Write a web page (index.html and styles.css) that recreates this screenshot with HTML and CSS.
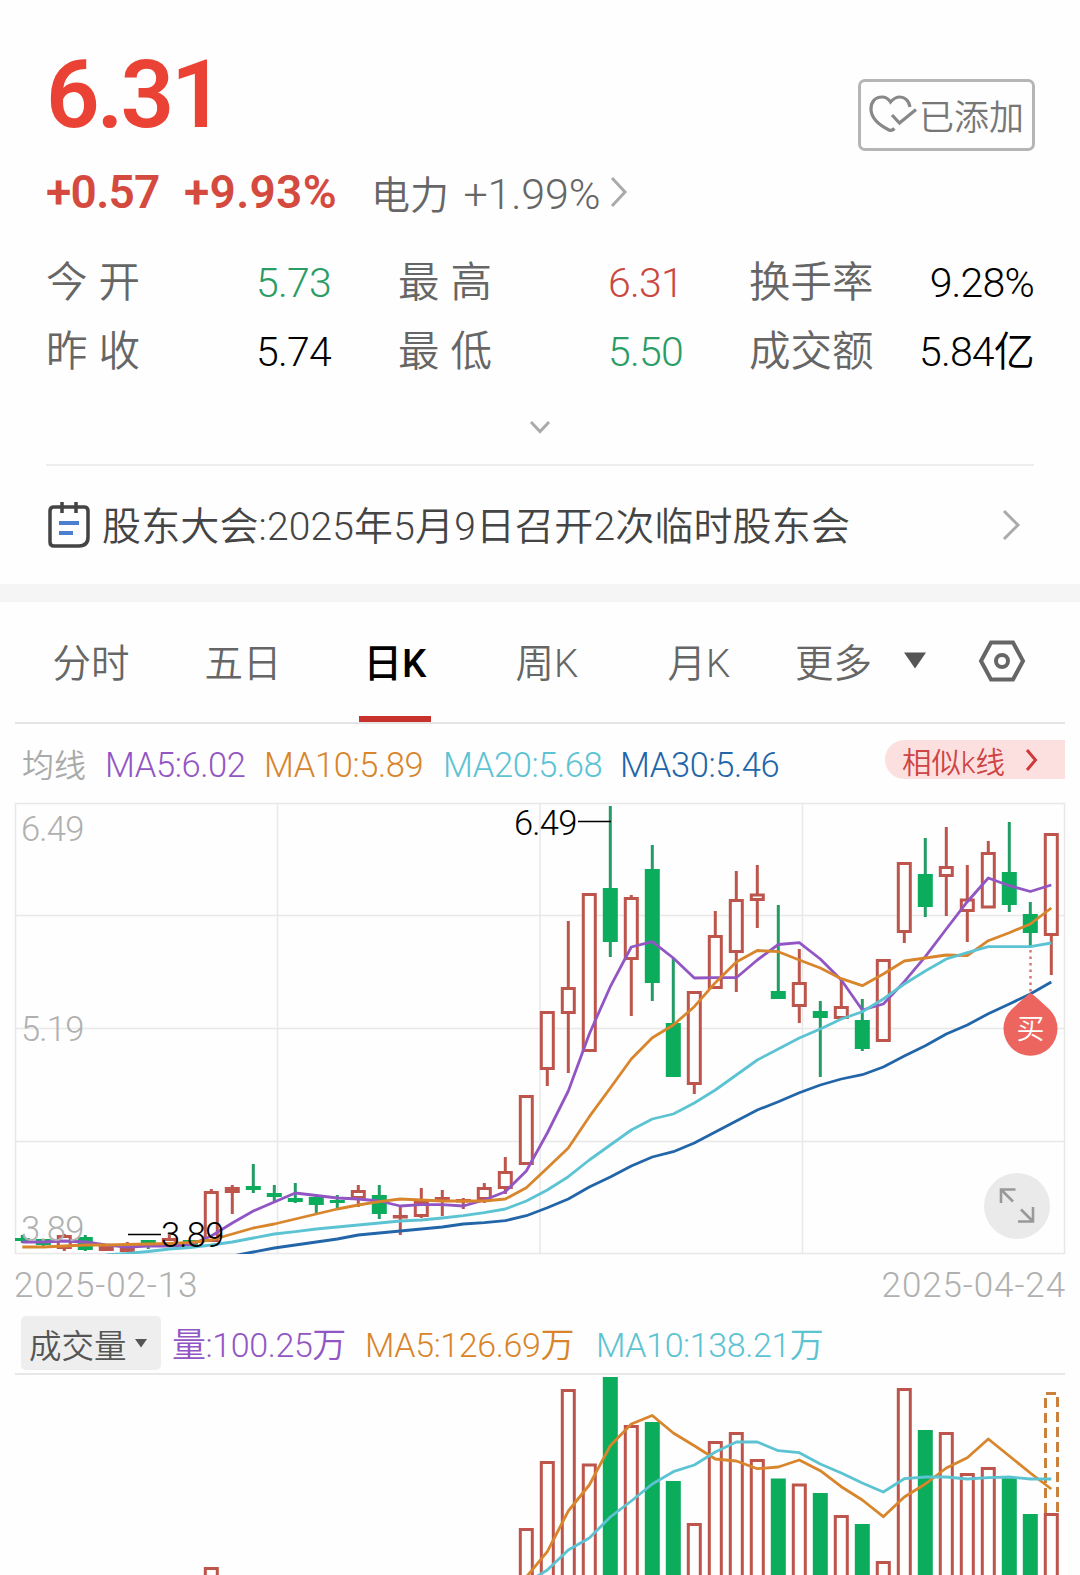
FILE: index.html
```html
<!DOCTYPE html>
<html lang="zh-CN">
<head>
    <meta charset="UTF-8">
    <meta name="viewport" content="width=device-width, initial-scale=1.0">
    <title>个股行情</title>
    <link rel="stylesheet" href="styles.css">
</head>
<body>
    <main class="page">
        <!-- Quote header -->
        <section class="quote">
            <div class="quote-top">
                <div class="price">6.31</div>
                <button class="added-btn" type="button">
                    <svg class="heart-icon" width="48" height="40" viewBox="0 0 48 40" fill="none">
                        <path d="M41 13C40 6 35 3 31 3C27 3 24 5 21.500 8C19 4 16 3 13 3C6 3 2 8 2 15C2 25 12 32 20 36C22 37 24 36 25.500 34.500"/>
                        <path d="M23 21L30.500 29L47 15.500"/>
                    </svg>
                    <span>已添加</span>
                </button>
            </div>
            <div class="change-row">
                <span class="change">+0.57</span>
                <span class="percent">+9.93%</span>
                <span class="sector">电力 <span class="sector-num">+1.99%</span></span>
                <svg class="sector-arrow" width="18" height="32" viewBox="0 0 18 32"><path d="M2 2L15 16L2 30"/></svg>
            </div>
            <div class="stats">
                <span class="label spaced">今开</span><span class="value green">5.73</span>
                <span class="label spaced">最高</span><span class="value red">6.31</span>
                <span class="label">换手率</span><span class="value last">9.28%</span>
                <span class="label spaced">昨收</span><span class="value">5.74</span>
                <span class="label spaced">最低</span><span class="value green">5.50</span>
                <span class="label">成交额</span><span class="value last">5.84亿</span>
            </div>
            <div class="more-stats">
                <svg width="24" height="16" viewBox="0 0 24 16"><path d="M3 3L12 12.500L21 3"/></svg>
            </div>
        </section>

        <!-- Announcement -->
        <section class="notice">
            <svg class="notice-icon" width="42" height="48" viewBox="0 0 42 48" fill="none">
                <path class="frame" d="M6 6H36Q40 6 40 10V36Q40 45 31 45H6Q2 45 2 41V10Q2 6 6 6Z"/>
                <path class="frame" d="M14 1V12M28 1V12"/>
                <path class="lines" d="M11 22H31M11 32H25"/>
            </svg>
            <span class="notice-text">股东大会:2025年5月9日召开2次临时股东会</span>
            <svg class="notice-arrow" width="19" height="34" viewBox="0 0 19 34"><path d="M2 3L16 17L2 31"/></svg>
        </section>

        <!-- Period tabs -->
        <nav class="tabs">
            <span class="tab">分时</span>
            <span class="tab">五日</span>
            <span class="tab active">日K</span>
            <span class="tab">周K</span>
            <span class="tab">月K</span>
            <span class="tab more">更多</span>
            <svg class="more-arrow" width="24" height="17" viewBox="0 0 24 17"><path d="M1 0.500H23L12 16.500Z"/></svg>
            <svg class="settings-icon" width="48" height="42" viewBox="0 0 48 42" fill="none">
                <path d="M13 2.500H35L45 21L35 39.500H13L3 21Z"/>
                <circle cx="24" cy="21" r="6"/>
            </svg>
        </nav>

        <!-- Moving averages -->
        <div class="ma-row">
            <span class="ma-title">均线</span>
            <span class="ma ma5">MA5:6.02</span>
            <span class="ma ma10">MA10:5.89</span>
            <span class="ma ma20">MA20:5.68</span>
            <span class="ma ma30">MA30:5.46</span>
            <a class="similar">相似k线
                <svg width="13" height="24" viewBox="0 0 13 24"><path d="M2 2L10.500 12L2 22"/></svg>
            </a>
        </div>

        <svg id="candle-chart" class="candle-chart" width="1080" height="462" viewBox="0 798 1080 462">
            <defs>
                <clipPath id="plot"><rect x="15" y="803" width="1050" height="451"/></clipPath>
            </defs>
            <path class="grid" d="M15 915.500H1064M15 1028.500H1064M15 1141.500H1064M277.500 804V1253M540 804V1253M802.500 804V1253"/>
            <rect class="frame" x="15.500" y="803.500" width="1049" height="450"/>
            <g id="candles" clip-path="url(#plot)"></g>
            <g id="averages" clip-path="url(#plot)"></g>
            <text class="axis" x="21" y="841">6.49</text>
            <text class="axis" x="21" y="1041">5.19</text>
            <text class="axis" x="21" y="1241">3.89</text>
            <path class="leader" d="M578 821.500H611M128 1234.500H161"/>
            <text class="mark" x="514" y="835">6.49</text>
            <text class="mark" x="161" y="1247">3.89</text>
            <!-- Buy marker -->
            <path class="buy-line" d="M1030.500 950V993"/>
            <path class="buy-pin" d="M1030.500 993Q1033 994 1050 1010A27 27 0 1 1 1011 1010Q1028 994 1030.500 993Z"/>
            <text class="buy-text" x="1030.500" y="1039">买</text>
            <!-- Expand button -->
            <circle class="expand-bg" cx="1017" cy="1206" r="33"/>
            <path class="expand-icon" d="M1001 1203V1189.500H1015.500M1001.500 1190L1013 1201.500M1018 1221.500H1033V1207M1032.500 1221L1021 1209.500"/>
        </svg>

        <div class="dates">
            <span>2025-02-13</span>
            <span>2025-04-24</span>
        </div>

        <!-- Volume -->
        <div class="volume-row">
            <span class="volume-select">成交量
                <svg width="12" height="9" viewBox="0 0 12 9"><path d="M0 0H12L6 8.500Z"/></svg>
            </span>
            <span class="ma vol">量:100.25万</span>
            <span class="ma vol5">MA5:126.69万</span>
            <span class="ma vol10">MA10:138.21万</span>
        </div>
        <svg id="volume-chart" class="volume-chart" width="1080" height="200" viewBox="0 1375 1080 200"></svg>
    </main>
    <script>
        const NS = 'http://www.w3.org/2000/svg';
        const STEP = 21;
        const FIRST = 22.3;
        const xAt = i => FIRST + STEP * i;

        // [rising, body top, body bottom, high, low]
        const candles = [
            [0, 1238, 1241, 1235, 1243], [0, 1239, 1245, 1239, 1248], [1, 1235, 1249, 1234, 1251],
            [0, 1237, 1250, 1235, 1251], [1, 1245, 1251, 1244, 1251], [1, 1246, 1252, 1242, 1252],
            [0, 1240, 1245, 1240, 1249], [1, 1238, 1245, 1235, 1247], [0, 1240, 1245, 1240, 1245],
            [1, 1191, 1242, 1189, 1242], [1, 1187, 1193, 1185, 1214], [0, 1186, 1190, 1164, 1193],
            [0, 1193, 1197, 1185, 1201], [0, 1198, 1202, 1183, 1203], [0, 1197, 1205, 1196, 1213],
            [0, 1200, 1203, 1195, 1208], [1, 1190, 1199, 1185, 1207], [0, 1195, 1214, 1185, 1219],
            [1, 1215, 1218, 1207, 1235], [1, 1201, 1217, 1188, 1218], [1, 1197, 1201, 1190, 1216],
            [1, 1199, 1202, 1198, 1209], [1, 1187, 1200, 1183, 1203], [1, 1171, 1189, 1157, 1194],
            [1, 1095, 1165, 1095, 1165], [1, 1011, 1070, 1011, 1086], [1, 987, 1014, 921, 1073],
            [1, 893, 1052, 893, 1052], [0, 888, 942, 806, 957], [1, 897, 960, 895, 1016],
            [0, 869, 983, 845, 1001], [0, 1023, 1077, 958, 1077], [1, 991, 1085, 991, 1094],
            [1, 935, 989, 911, 989], [1, 899, 953, 871, 992], [1, 893.5, 901, 865, 928],
            [0, 991, 999, 905, 999], [1, 982, 1007, 949, 1023], [0, 1011, 1018, 1001, 1077],
            [1, 1006, 1019, 980, 1019], [0, 1020, 1049, 999, 1051], [1, 959, 1042, 959, 1042],
            [1, 862, 933, 862, 943], [0, 874, 907, 838, 917], [1, 866, 877, 827, 916],
            [1, 898.5, 912, 865, 942], [1, 852, 908.5, 841, 908], [0, 872, 905, 822, 912],
            [0, 914, 933, 902, 946], [1, 833, 936, 833, 975]
        ];

        // class, first index, y values
        const averages = [
            ['line5', 0, [1242, 1242, 1241, 1242, 1245, 1247, 1246, 1246, 1245, 1236, 1223, 1211, 1202, 1193, 1195.5, 1198, 1199, 1201, 1206, 1204.6, 1204.6, 1206, 1200, 1191.7, 1171, 1133, 1091, 1034, 986.7, 947, 941.7, 958, 978, 977.7, 977.7, 960, 944.5, 942.7, 959, 980, 1010, 1004, 981.7, 956.7, 929, 901.7, 878, 885.7, 891.5, 885]],
            ['line10', 0, [1247, 1247, 1246, 1245, 1245, 1244.5, 1244, 1243.5, 1242.5, 1240, 1234, 1228, 1224, 1219, 1214, 1209, 1205, 1201.7, 1199, 1200, 1201, 1201, 1201, 1199, 1187.7, 1168, 1148, 1116.7, 1088, 1059, 1037.7, 1025, 1006.7, 982.7, 962, 950.5, 951.7, 960, 968, 978.7, 985.7, 974, 961, 958, 955, 955.7, 940.7, 932.7, 924, 908]],
            ['line20', 4, [1255, 1253.5, 1251.5, 1249, 1247.5, 1245, 1242, 1238, 1234, 1231.7, 1229, 1227, 1225, 1223, 1221, 1220, 1218, 1215.7, 1212.7, 1209, 1201, 1190, 1176.7, 1160, 1145, 1130, 1119, 1114, 1103, 1090, 1075, 1060, 1049, 1038, 1029, 1019, 1011.7, 999, 984, 971, 959, 952.7, 946.7, 946.7, 946.7, 943]],
            ['line30', 10, [1256, 1252, 1248, 1245, 1242, 1239, 1235, 1233, 1231, 1229, 1227, 1224, 1222.6, 1220.7, 1215.7, 1207.7, 1199, 1187, 1177, 1166, 1157, 1151.7, 1143, 1132, 1121, 1110, 1101.7, 1092.7, 1085, 1079, 1074.7, 1067, 1056, 1045.7, 1034, 1025, 1013.7, 1004, 994, 982]]
        ];

        // [index, rising, bar top]
        const volumes = [
            [9, 1, 1567], [24, 1, 1528], [25, 1, 1461], [26, 1, 1389], [27, 1, 1463.5], [28, 0, 1377],
            [29, 1, 1425], [30, 0, 1422], [31, 0, 1481], [32, 1, 1523], [33, 1, 1441], [34, 1, 1432],
            [35, 1, 1459], [36, 0, 1478.5], [37, 1, 1483.5], [38, 0, 1493], [39, 1, 1515], [40, 0, 1524],
            [41, 1, 1561], [42, 1, 1388], [43, 0, 1430], [44, 1, 1432], [45, 1, 1473], [46, 1, 1467],
            [47, 0, 1478], [48, 0, 1514], [49, 1, 1513]
        ];
        const volumeAverages = [
            ['line10', 24, [1577, 1551.7, 1511, 1485, 1445.7, 1424, 1415.5, 1433, 1445.7, 1459, 1461, 1468.7, 1467, 1460, 1470.7, 1486.7, 1500, 1516.7, 1497, 1484, 1468, 1457.7, 1439, 1456, 1473, 1489]],
            ['line20', 24, [1583, 1570, 1550, 1538, 1517, 1501, 1484, 1471.7, 1465, 1452, 1442, 1442, 1450.7, 1452.7, 1464, 1473, 1483, 1492, 1478.7, 1477, 1477, 1479, 1477.7, 1477, 1479, 1479]]
        ];

        function add(parent, tag, attrs) {
            const el = document.createElementNS(NS, tag);
            for (const key in attrs) el.setAttribute(key, attrs[key]);
            parent.appendChild(el);
        }

        function drawBody(parent, x, top, bottom, rising) {
            if (rising) {
                const h = Math.max(bottom - top - 3, 0.5);
                add(parent, 'rect', { class: 'up', x: x - 6, y: top + 1.5, width: 12, height: h });
            } else {
                add(parent, 'rect', { class: 'down', x: x - 7.5, y: top, width: 15, height: bottom - top });
            }
        }

        function drawLine(parent, [cls, start, ys]) {
            const points = ys.map((y, i) => xAt(start + i) + ',' + y).join(' ');
            add(parent, 'polyline', { class: 'line ' + cls, points });
        }

        const candleGroup = document.getElementById('candles');
        candles.forEach(([rising, top, bottom, high, low], i) => {
            const x = xAt(i);
            const cls = rising ? 'wick wick-up' : 'wick wick-down';
            if (high < top) add(candleGroup, 'path', { class: cls, d: `M${x} ${high}V${top + 1}` });
            if (low > bottom) add(candleGroup, 'path', { class: cls, d: `M${x} ${bottom - 1}V${low}` });
            drawBody(candleGroup, x, top, bottom, rising);
        });
        const averageGroup = document.getElementById('averages');
        averages.forEach(line => drawLine(averageGroup, line));

        const volumeChart = document.getElementById('volume-chart');
        volumes.forEach(([i, rising, top]) => drawBody(volumeChart, xAt(i), top, 1590, rising));
        // projected volume of the current day
        add(volumeChart, 'path', { class: 'forecast', d: 'M1045.5 1513V1393.5H1057.5V1513' });
        volumeAverages.forEach(line => drawLine(volumeChart, line));
    </script>
</body>
</html>
```
FILE: styles.css
```css
:root {
    --red: #c9483f;
    --green: #2a9d67;
    --grey: #666;
    --light-grey: #b0b0b0;
    --line: #e8e8e8;
    --purple: #9256c4;
    --orange: #d8852b;
    --cyan: #5cc3d3;
    --blue: #2265a8;
}

* {
    box-sizing: border-box;
}

body {
    margin: 0;
    background-color: #fefefe;
    color: #000;
    font-family: Roboto, "Noto Sans CJK SC", sans-serif;
    font-weight: 350;
}

svg {
    display: block;
    flex-shrink: 0;
}

.page {
    width: 1080px;
    height: 1575px;
    overflow: hidden;
}

/* Quote header */
.quote {
    height: 466px;
    margin: 0 46px;
    border-bottom: 2px solid #eee;
}

.quote-top {
    display: flex;
    justify-content: space-between;
    height: 158px;
}

.price {
    padding-top: 41px;
    font-size: 94px;
    font-weight: 600;
    line-height: 108px;
    letter-spacing: -3px;
    color: #ea4335;
}

.added-btn {
    display: flex;
    align-items: center;
    width: 177px;
    height: 72px;
    margin: 79px -1px 0 0;
    padding: 0 0 2px 8px;
    border: 3px solid #b5b5b5;
    border-radius: 7px;
    background: none;
    color: #777;
    font-family: inherit;
    font-size: 35px;
    font-weight: 350;
    white-space: nowrap;
}

.heart-icon {
    margin-right: 2px;
    stroke: #888;
    stroke-width: 3.2;
}

.change-row {
    display: flex;
    align-items: center;
    height: 68px;
    white-space: nowrap;
}

.change,
.percent {
    font-size: 46px;
    font-weight: 600;
    color: #d54a3f;
}

.change {
    width: 138px;
    letter-spacing: -0.7px;
}

.percent {
    width: 187px;
    letter-spacing: 0.3px;
}

.sector {
    width: 239px;
    font-size: 39px;
    color: var(--grey);
}

.sector-num {
    margin-left: 5px;
    font-size: 43px;
    letter-spacing: -0.2px;
}

.sector-arrow,
.notice-arrow,
.more-stats svg {
    fill: none;
    stroke: #aaa;
    stroke-width: 3;
}

.stats {
    display: grid;
    grid-template-columns: 210px 142px 210px 141px 130px 155px;
    grid-auto-rows: 69px;
    align-items: baseline;
    margin-top: 22px;
    line-height: 69px;
    white-space: nowrap;
}

.label {
    font-size: 41.5px;
    color: var(--grey);
}

.spaced {
    letter-spacing: 11px;
}

.value {
    font-size: 41px;
    letter-spacing: -0.8px;
}

.value.last {
    text-align: right;
}

.green {
    color: var(--green);
}

.red {
    color: var(--red);
}

.more-stats {
    display: flex;
    justify-content: center;
    padding-top: 33px;
}

/* Announcement */
.notice {
    display: flex;
    align-items: center;
    height: 136px;
    padding: 0 59px 0 48px;
    border-bottom: 18px solid #f5f5f5;
    font-size: 39px;
    color: #444;
    white-space: nowrap;
}

.notice-icon {
    margin-right: 12px;
}

.notice-icon .frame {
    stroke: #444;
    stroke-width: 3.5;
}

.notice-icon .lines {
    stroke: #4c7fd0;
    stroke-width: 4;
}

.notice-text {
    padding-bottom: 4px;
    letter-spacing: 0.15px;
}

.notice-arrow {
    margin-left: auto;
}

/* Period tabs */
.tabs {
    display: flex;
    align-items: center;
    height: 122px;
    margin: 0 15px;
    border-bottom: 2px solid #e4e4e4;
    font-size: 38.5px;
    color: var(--grey);
}

.tab {
    position: relative;
    width: 152px;
    height: 120px;
    line-height: 123px;
    text-align: center;
}

.tab.active {
    font-weight: 500;
    color: #000;
}

.tab.active::after {
    content: "";
    position: absolute;
    left: 40px;
    bottom: 0;
    width: 72px;
    height: 6px;
    background-color: #c8322d;
}

.tab.more {
    width: 117px;
}

.more-arrow {
    margin: -4px 0 0 11px;
    fill: #555;
}

.settings-icon {
    margin: -2px 0 0 51px;
    stroke: #666;
    stroke-width: 4;
}

/* Indicator rows */
.ma-row {
    display: flex;
    align-items: center;
    height: 74px;
    padding: 8px 15px 0 22px;
    white-space: nowrap;
}

.ma-title {
    width: 83px;
    padding-bottom: 4px;
    font-size: 32px;
    color: #aaa;
}

.ma {
    font-size: 34.5px;
    letter-spacing: -0.4px;
}

.ma5,
.vol {
    color: var(--purple);
}

.ma10,
.vol5 {
    color: var(--orange);
}

.ma20,
.vol10 {
    color: var(--cyan);
}

.ma30 {
    color: var(--blue);
}

.ma5 {
    width: 159px;
}

.ma10 {
    width: 179px;
}

.ma20 {
    width: 177px;
}

.similar {
    display: flex;
    align-items: center;
    gap: 20px;
    width: 180px;
    height: 39px;
    margin: -11px 0 0 auto;
    padding-left: 17px;
    border-radius: 20px 0 0 20px;
    background-color: #fce0e0;
    font-size: 29.5px;
    color: #cf4444;
}

.similar svg {
    fill: none;
    stroke: #d03a3a;
    stroke-width: 3;
}

/* Candle chart */
.candle-chart .grid,
.candle-chart .frame {
    fill: none;
    stroke: var(--line);
    stroke-width: 1.5;
}

.wick {
    stroke-width: 3;
}

.wick-up,
.up {
    stroke: #bd554c;
}

.wick-down {
    stroke: #239c64;
}

.up {
    fill: #fefefe;
    stroke-width: 3;
}

.down {
    fill: #0bac5c;
}

.line {
    fill: none;
    stroke-width: 2.8;
    stroke-linejoin: round;
}

.line5 {
    stroke: var(--purple);
}

.line10 {
    stroke: var(--orange);
}

.line20 {
    stroke: var(--cyan);
}

.line30 {
    stroke: var(--blue);
}

.axis,
.mark {
    font-size: 34.5px;
    letter-spacing: -0.8px;
}

.axis {
    fill: #b0b0b0;
}

.mark {
    fill: #000;
}

.leader {
    stroke: #000;
    stroke-width: 1.6;
}

.buy-line {
    stroke: #d4757a;
    stroke-width: 2.5;
    stroke-dasharray: 2.5 4;
}

.buy-pin {
    fill: #ec665f;
}

.buy-text {
    fill: #fff;
    font-size: 28px;
    text-anchor: middle;
}

.expand-bg {
    fill: #eaeaea;
}

.expand-icon {
    fill: none;
    stroke: #999;
    stroke-width: 2.6;
}

.dates {
    display: flex;
    justify-content: space-between;
    height: 51px;
    padding: 0 14px;
    font-size: 35px;
    line-height: 51px;
    letter-spacing: 0.9px;
    color: var(--light-grey);
}

/* Volume */
.volume-row {
    display: flex;
    align-items: center;
    height: 64px;
    margin: 0 15px;
    padding: 2px 0 0 6px;
    border-bottom: 2px solid var(--line);
    white-space: nowrap;
}

.volume-select {
    display: flex;
    align-items: center;
    gap: 8px;
    width: 140px;
    height: 54px;
    margin-right: 11px;
    padding-left: 8px;
    border-radius: 5px;
    background-color: #eee;
    font-size: 32.5px;
    color: #555;
}

.volume-select svg {
    fill: #555;
}

.volume-row .ma {
    padding-bottom: 2px;
    font-size: 34px;
}

.vol {
    width: 193px;
}

.vol5 {
    width: 231px;
}

.forecast {
    fill: none;
    stroke: #c9813d;
    stroke-width: 3;
    stroke-dasharray: 10 5;
}
```
